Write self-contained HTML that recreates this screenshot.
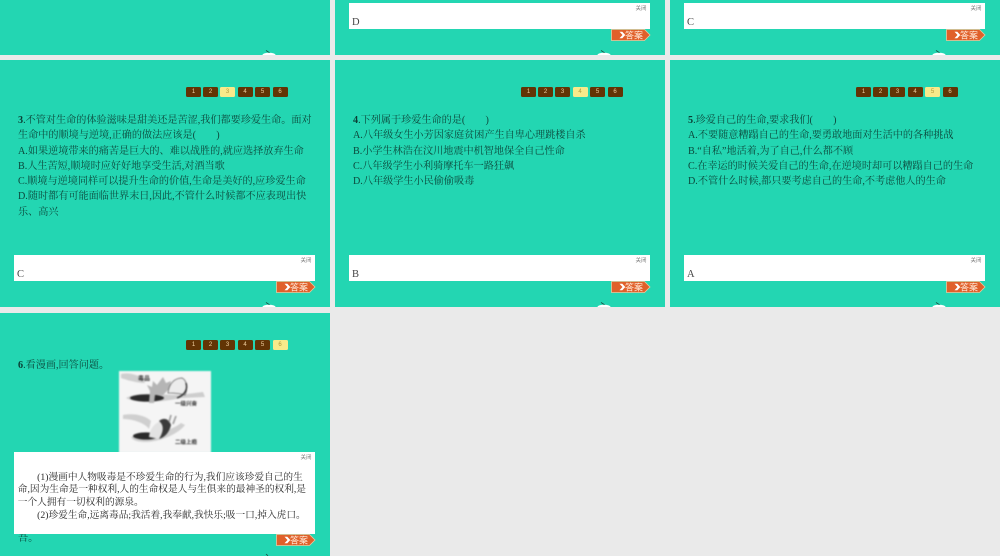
<!DOCTYPE html>
<html lang="zh">
<head>
<meta charset="utf-8">
<title>珍爱生命</title>
<style>
html,body{margin:0;padding:0;}
body{position:relative;width:1000px;height:556px;overflow:hidden;background:#eaeaea;font-family:"Liberation Serif","Noto Serif CJK SC",serif;}
.s{position:absolute;background:#23d6b2;width:330px;overflow:hidden;filter:blur(.3px);}
.t{position:absolute;left:18px;font-size:10.15px;line-height:15.3px;color:#0c483c;white-space:nowrap;}
.t b{color:#0a3d33;}
.n{position:absolute;top:27px;width:15px;height:9.5px;background:#623405;border-radius:1.5px;color:#f0d0a0;font:6px/10.5px "Liberation Sans",sans-serif;text-align:center;}
.n.on{background:#f8ea8a;color:#b09a3c;}
.box{position:absolute;left:14px;width:301px;background:#fff;box-sizing:border-box;color:#444;}
.box i{position:absolute;right:3.5px;top:3px;font:normal 5.5px/7px "Liberation Sans","Noto Sans CJK SC",sans-serif;color:#777;}
.box span{position:absolute;left:3px;top:13.5px;font-size:10.5px;line-height:12px;}
.btn{position:absolute;left:276px;width:40px;height:12px;}
.btn text{font-family:"Liberation Sans","Noto Sans CJK SC",sans-serif;font-size:9px;fill:#ffe9d8;}
.h{position:absolute;left:261px;width:16px;height:7px;}
</style>
</head>
<body>

<!-- Row 1 -->
<div class="s" style="left:0;top:0;height:55px;">
<svg class="h" style="top:48px" viewBox="0 0 16 7"><ellipse cx="8" cy="7" rx="6.500" ry="2.300" fill="#fff"/><path d="M5 2.500 L8.500 4.700" stroke="#174a3e" stroke-width=".8" fill="none"/></svg>
</div>
<div class="s" style="left:335px;top:0;height:55px;">
<div class="box" style="top:3px;height:26px;"><i>关闭</i><span>D</span></div>
<svg class="btn" style="top:29px" viewBox="0 0 40 12"><path d="M.5 .5H33.500L39 6 33.500 11.500H.5Z" fill="#e0602a" stroke="#e9c9a0" stroke-width=".8"/><path d="M8.500 2.800l3 3.200-3 3.200h2.800l3-3.200-3-3.200z" fill="#fff"/><text x="14" y="9.500">答案</text></svg>
<svg class="h" style="top:48px" viewBox="0 0 16 7"><ellipse cx="8" cy="7" rx="6.500" ry="2.300" fill="#fff"/><path d="M5 2.500 L8.500 4.700" stroke="#174a3e" stroke-width=".8" fill="none"/></svg>
</div>
<div class="s" style="left:670px;top:0;height:55px;">
<div class="box" style="top:3px;height:26px;"><i>关闭</i><span>C</span></div>
<svg class="btn" style="top:29px" viewBox="0 0 40 12"><path d="M.5 .5H33.500L39 6 33.500 11.500H.5Z" fill="#e0602a" stroke="#e9c9a0" stroke-width=".8"/><path d="M8.500 2.800l3 3.200-3 3.200h2.800l3-3.200-3-3.200z" fill="#fff"/><text x="14" y="9.500">答案</text></svg>
<svg class="h" style="top:48px" viewBox="0 0 16 7"><ellipse cx="8" cy="7" rx="6.500" ry="2.300" fill="#fff"/><path d="M5 2.500 L8.500 4.700" stroke="#174a3e" stroke-width=".8" fill="none"/></svg>
</div>

<!-- Row 2 -->
<div class="s" style="left:0;top:60px;height:247px;">
<div class="n" style="left:186px">1</div><div class="n" style="left:203px">2</div><div class="n on" style="left:220px">3</div><div class="n" style="left:237.500px">4</div><div class="n" style="left:255px">5</div><div class="n" style="left:272.500px">6</div>
<div class="t" style="top:53px"><b>3</b>.不管对生命的体验滋味是甜美还是苦涩,我们都要珍爱生命。面对<br>生命中的顺境与逆境,正确的做法应该是(　　)<br>A.如果逆境带来的痛苦是巨大的、难以战胜的,就应选择放弃生命<br>B.人生苦短,顺境时应好好地享受生活,对酒当歌<br>C.顺境与逆境同样可以提升生命的价值,生命是美好的,应珍爱生命<br>D.随时都有可能面临世界末日,因此,不管什么时候都不应表现出快<br>乐、高兴</div>
<div class="box" style="top:195px;height:26px;"><i>关闭</i><span>C</span></div>
<svg class="btn" style="top:221px" viewBox="0 0 40 12"><path d="M.5 .5H33.500L39 6 33.500 11.500H.5Z" fill="#e0602a" stroke="#e9c9a0" stroke-width=".8"/><path d="M8.500 2.800l3 3.200-3 3.200h2.800l3-3.200-3-3.200z" fill="#fff"/><text x="14" y="9.500">答案</text></svg>
<svg class="h" style="top:240px" viewBox="0 0 16 7"><ellipse cx="8" cy="7" rx="6.500" ry="2.300" fill="#fff"/><path d="M5 2.500 L8.500 4.700" stroke="#174a3e" stroke-width=".8" fill="none"/></svg>
</div>

<div class="s" style="left:335px;top:60px;height:247px;">
<div class="n" style="left:186px">1</div><div class="n" style="left:203px">2</div><div class="n" style="left:220px">3</div><div class="n on" style="left:237.500px">4</div><div class="n" style="left:255px">5</div><div class="n" style="left:272.500px">6</div>
<div class="t" style="top:53px"><b>4</b>.下列属于珍爱生命的是(　　)<br>A.八年级女生小芳因家庭贫困产生自卑心理跳楼自杀<br>B.小学生林浩在汶川地震中机智地保全自己性命<br>C.八年级学生小利骑摩托车一路狂飙<br>D.八年级学生小民偷偷吸毒</div>
<div class="box" style="top:195px;height:26px;"><i>关闭</i><span>B</span></div>
<svg class="btn" style="top:221px" viewBox="0 0 40 12"><path d="M.5 .5H33.500L39 6 33.500 11.500H.5Z" fill="#e0602a" stroke="#e9c9a0" stroke-width=".8"/><path d="M8.500 2.800l3 3.200-3 3.200h2.800l3-3.200-3-3.200z" fill="#fff"/><text x="14" y="9.500">答案</text></svg>
<svg class="h" style="top:240px" viewBox="0 0 16 7"><ellipse cx="8" cy="7" rx="6.500" ry="2.300" fill="#fff"/><path d="M5 2.500 L8.500 4.700" stroke="#174a3e" stroke-width=".8" fill="none"/></svg>
</div>

<div class="s" style="left:670px;top:60px;height:247px;">
<div class="n" style="left:186px">1</div><div class="n" style="left:203px">2</div><div class="n" style="left:220px">3</div><div class="n" style="left:237.500px">4</div><div class="n on" style="left:255px">5</div><div class="n" style="left:272.500px">6</div>
<div class="t" style="top:53px"><b>5</b>.珍爱自己的生命,要求我们(　　)<br>A.不要随意糟蹋自己的生命,要勇敢地面对生活中的各种挑战<br>B.“自私”地活着,为了自己,什么都不顾<br>C.在幸运的时候关爱自己的生命,在逆境时却可以糟蹋自己的生命<br>D.不管什么时候,都只要考虑自己的生命,不考虑他人的生命</div>
<div class="box" style="top:195px;height:26px;"><i>关闭</i><span>A</span></div>
<svg class="btn" style="top:221px" viewBox="0 0 40 12"><path d="M.5 .5H33.500L39 6 33.500 11.500H.5Z" fill="#e0602a" stroke="#e9c9a0" stroke-width=".8"/><path d="M8.500 2.800l3 3.200-3 3.200h2.800l3-3.200-3-3.200z" fill="#fff"/><text x="14" y="9.500">答案</text></svg>
<svg class="h" style="top:240px" viewBox="0 0 16 7"><ellipse cx="8" cy="7" rx="6.500" ry="2.300" fill="#fff"/><path d="M5 2.500 L8.500 4.700" stroke="#174a3e" stroke-width=".8" fill="none"/></svg>
</div>

<!-- Row 3 -->
<div class="s" style="left:0;top:313px;height:243px;">
<div class="n" style="left:186px">1</div><div class="n" style="left:203px">2</div><div class="n" style="left:220px">3</div><div class="n" style="left:237.500px">4</div><div class="n" style="left:255px">5</div><div class="n on" style="left:272.500px">6</div>
<div class="t" style="top:45px"><b>6</b>.看漫画,回答问题。</div>
<svg style="position:absolute;left:119px;top:58px;filter:blur(.7px)" width="92" height="82" viewBox="0 0 92 82">
<rect width="92" height="82" fill="#f5f5f5"/>
<path d="M2 3C10 1 18 4 24 7L26 12C18 12 8 9 2 7Z" fill="#cfcfcf"/>
<path d="M7 27C20 20 42 24 60 24L84 21 86 26 62 27C48 30 20 34 7 27Z" fill="#cdcdcd"/>
<ellipse cx="28" cy="27" rx="17" ry="3.600" fill="#2a2a2a"/>
<path d="M30 32L31 20 28 14 33 16 34 10 38 14 44 6 47 12 52 10 50 18 44 24 36 24 35 32Z" fill="#b5b5b5"/>
<path d="M49 22C50 12 56 7 63 7 68 9 69 18 66 24 60 22 54 22 49 22Z" fill="#ececec" stroke="#666" stroke-width=".8"/>
<path d="M67 12C69 18 66 24 58 27" fill="none" stroke="#2a2a2a" stroke-width="1.400"/>
<path d="M4 44C14 42 26 44 32 50L30 58C26 52 14 48 4 48Z" fill="#cfcfcf"/>
<path d="M12 66C30 62 50 62 62 52L66 54C60 62 44 70 28 71 20 71 14 70 12 66Z" fill="#d0d0d0"/>
<ellipse cx="27" cy="65" rx="13" ry="3.600" fill="#2a2a2a"/>
<path d="M30 66C31 56 38 50 44 50 48 54 46 62 40 68Z" fill="#e2e2e2"/>
<path d="M40 50C45 46 50 48 52 54 50 62 46 66 40 68 45 60 45 54 40 50Z" fill="#3a3a3a"/>
<path d="M50 51L52 44M54 53L57 45" stroke="#999" stroke-width="1.600"/>
<text x="19" y="9.500" font-size="6" font-weight="bold" fill="#333" font-family="Noto Sans CJK SC,sans-serif">毒品</text>
<text x="56" y="34.500" font-size="5.500" font-weight="bold" fill="#333" font-family="Noto Sans CJK SC,sans-serif">一级兴奋</text>
<text x="56" y="73" font-size="5.500" font-weight="bold" fill="#333" font-family="Noto Sans CJK SC,sans-serif">二级上瘾</text>
</svg>
<div class="t" style="top:218px">吾。</div>
<div class="box" style="top:139px;height:82px;"><i>关闭</i>
<div style="position:absolute;left:3.800px;top:19.500px;font-size:9.700px;line-height:12.700px;color:#2a2a2a;white-space:nowrap;">　　(1)漫画中人物吸毒是不珍爱生命的行为,我们应该珍爱自己的生<br>命,因为生命是一种权利,人的生命权是人与生俱来的最神圣的权利,是<br>一个人拥有一切权利的源泉。<br>　　(2)珍爱生命,远离毒品;我活着,我奉献,我快乐;吸一口,掉入虎口。</div>
</div>
<svg class="btn" style="top:221px" viewBox="0 0 40 12"><path d="M.5 .5H33.500L39 6 33.500 11.500H.5Z" fill="#e0602a" stroke="#e9c9a0" stroke-width=".8"/><path d="M8.500 2.800l3 3.200-3 3.200h2.800l3-3.200-3-3.200z" fill="#fff"/><text x="14" y="9.500">答案</text></svg>
<svg class="h" style="top:236px" viewBox="0 0 16 7"><path d="M5 5 L7 6.800" stroke="#174a3e" stroke-width=".8" fill="none"/></svg>
</div>
</body>
</html>
